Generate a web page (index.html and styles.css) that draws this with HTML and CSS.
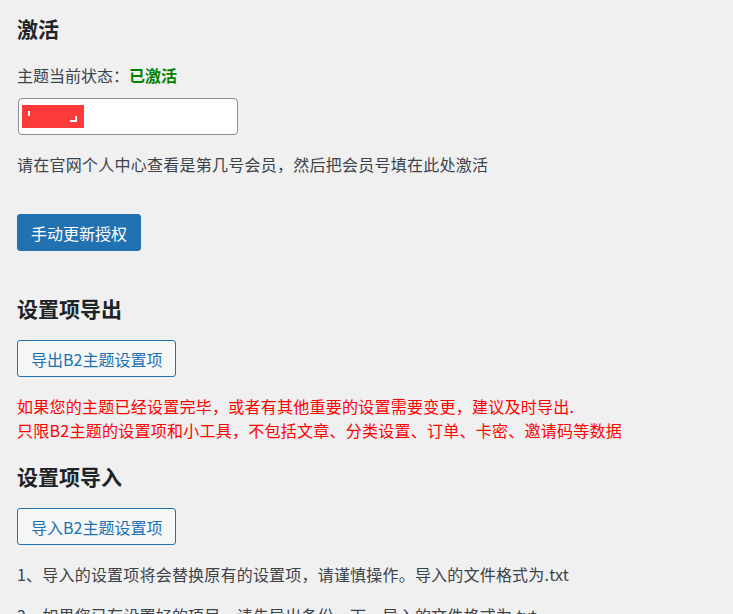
FILE: index.html
```html
<!DOCTYPE html>
<html lang="zh-CN">
<head>
<meta charset="utf-8">
<title>激活</title>
<link rel="stylesheet" href="styles.css">
</head>
<body>
<div class="wrap">
  <h2 class="title first">激活</h2>
  <p class="status">主题当前状态：<span class="ok">已激活</span></p>
  <div class="input">
    <span class="mask"><span class="c-tl"></span><span class="c-br"></span></span>
  </div>
  <p class="desc">请在官网个人中心查看是第几号会员，然后把会员号填在此处激活</p>
  <button class="btn primary">手动更新授权</button>

  <h2 class="title">设置项导出</h2>
  <button class="btn secondary">导出B2主题设置项</button>
  <p class="warn">如果您的主题已经设置完毕，或者有其他重要的设置需要变更，建议及时导出.<br>只限B2主题的设置项和小工具，不包括文章、分类设置、订单、卡密、邀请码等数据</p>

  <h2 class="title">设置项导入</h2>
  <button class="btn secondary">导入B2主题设置项</button>
  <p class="note">1、导入的设置项将会替换原有的设置项，请谨慎操作。导入的文件格式为.txt</p>
  <p class="note">2、如果您已有设置好的项目，请先导出备份一下。导入的文件格式为.txt</p>
</div>
</body>
</html>
```
FILE: styles.css
```css
html, body {
  margin: 0;
  padding: 0;
  background: #f0f0f1;
  height: 614px;
  overflow: hidden;
}
body {
  font-family: "Noto Sans CJK SC", "Noto Sans", sans-serif;
  color: #3c434a;
  font-size: 16px;
  line-height: 24px;
}
.wrap {
  padding: 0 0 0 17px;
}
.title {
  font-size: 21px;
  font-weight: 700;
  color: #1d2327;
  line-height: 28px;
  margin: 0;
}
.first { padding-top: 14px; }
.status {
  margin: 21px 0 0;
  font-size: 16px;
}
.ok {
  color: #008000;
  font-weight: 700;
}
.input {
  margin: 11px 0 0 1px;
  width: 215px;
  height: 35px;
  border: 1px solid #8c8f94;
  border-radius: 4px;
  background: #fff;
  display: flex;
  align-items: center;
  padding-left: 3px;
  box-sizing: content-box;
}
.mask {
  position: relative;
  display: block;
  width: 62px;
  height: 23px;
  background: #fd3a3a;
}
.c-tl {
  position: absolute;
  left: 6px;
  top: 6px;
  width: 2px;
  height: 5px;
  border-top: 1px solid #fff;
  border-left: 2px solid #fff;
  box-sizing: border-box;
}
.c-br {
  position: absolute;
  left: 48px;
  top: 11px;
  width: 7px;
  height: 6px;
  border-right: 2px solid #fff;
  border-bottom: 2px solid #fff;
  box-sizing: border-box;
}
.desc {
  margin: 17px 0 0;
  letter-spacing: 0.25px;
}
.btn {
  display: block;
  font-family: inherit;
  font-size: 16px;
  line-height: 20px;
  height: 37px;
  padding: 0 13px;
  border-radius: 3px;
  cursor: pointer;
}
.primary {
  margin-top: 38px;
  background: #2271b1;
  border: 1px solid #2271b1;
  color: #fff;
}
.secondary {
  margin-top: 18px;
  background: #f6f7f7;
  border: 1px solid #2271b1;
  color: #2271b1;
}
.primary + .title { margin-top: 43px; }
.warn {
  margin: 17px 0 0;
  color: #ff0000;
  letter-spacing: 0.25px;
}
.warn + .title { margin-top: 20px; }
.note {
  margin: 17px 0 0;
  letter-spacing: 0.2px;
}
.note + .note { margin-top: 17px; }
```
